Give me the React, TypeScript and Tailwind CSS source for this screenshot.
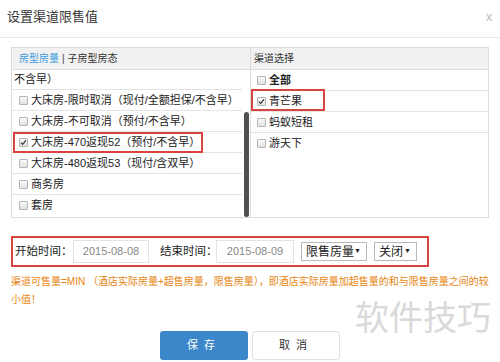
import React from 'react'

const leftRows = [
  { label: '大床房-限时取消（现付/全额担保/不含早）', checked: false },
  { label: '大床房-不可取消（预付/不含早）', checked: false },
  { label: '大床房-470返现52（预付/不含早）', checked: true, marked: true },
  { label: '大床房-480返现53（现付/含双早）', checked: false },
  { label: '商务房', checked: false },
  { label: '套房', checked: false },
]

const channels = [
  { label: '全部', checked: false, bold: true },
  { label: '青芒果', checked: true, marked: true },
  { label: '蚂蚁短租', checked: false },
  { label: '游天下', checked: false },
]

function Box({ checked }: { checked: boolean }) {
  return (
    <span className="mr-[3px] flex h-[9px] w-[9px] shrink-0 items-center justify-center rounded-[1px] border border-[#b5b5b5] bg-gradient-to-b from-[#fafafa] to-[#e2e2e2]">
      {checked && (
        <svg viewBox="0 0 8 8" className="h-[7px] w-[7px]">
          <path d="M1.2 4.2 L3.1 6.1 L6.8 1.6" fill="none" stroke="#333" strokeWidth="1.4" />
        </svg>
      )}
    </span>
  )
}

function Select({ label, width }: { label: string; width: string }) {
  return (
    <div
      className={`flex h-[19px] ${width} items-center justify-between border border-[#b9b9b9] bg-white pl-[4px] pr-[5px] text-[12px] text-[#222]`}
    >
      <span className="whitespace-nowrap">{label}</span>
      <span className="text-[7px] text-[#222]">▼</span>
    </div>
  )
}

export default function App() {
  return (
    <div className="relative h-[362px] w-[500px] overflow-hidden bg-white font-['Liberation_Sans','Noto_Sans_CJK_SC',sans-serif] text-[#333]">
      <div className="flex h-[38px] items-center justify-between border-b border-[#e8e8e8] pl-[7px] pr-[8px] pb-[3px]">
        <span className="text-[13px] text-[#333]">设置渠道限售值</span>
        <span className="text-[12px] text-[#bbb]">x</span>
      </div>

      <div className="px-[11px] pt-[9px]">
        <div className="flex h-[171px] border border-[#dcdcdc]">
          {/* room types */}
          <div className="flex w-[239px] flex-col border-r border-[#dcdcdc]">
            <div className="flex h-[22px] items-center border-b border-[#dcdcdc] bg-[#f1f1f1] pl-[7px] text-[10px]">
              <span className="text-[#3d9be0]">房型房量</span>
              <span className="mx-[3px] text-[#444]">|</span>
              <span className="text-[#333]">子房型房态</span>
            </div>
            <div className="flex flex-1 overflow-hidden">
              <div className="flex w-[231px] flex-col">
                <div className="flex h-[20px] items-center border-b border-[#e3e3e3] pl-[2px] text-[11px] text-[#222]">
                  不含早）
                </div>
                {leftRows.map((row, i) => (
                  <div
                    key={row.label}
                    className={`relative flex h-[21px] items-center pl-[7px] text-[11px] text-[#222] ${
                      i < leftRows.length - 1 ? 'border-b border-[#e3e3e3]' : ''
                    }`}
                  >
                    <Box checked={row.checked} />
                    <span className="whitespace-nowrap">{row.label}</span>
                    {row.marked && (
                      <span className="absolute left-[1px] top-[0px] h-[21px] w-[190px] border-2 border-[#d8443f]" />
                    )}
                  </div>
                ))}
              </div>
              <div className="flex w-[8px] justify-center">
                <div className="mt-[42px] h-[105px] w-[5px] rounded-[3px] bg-[#4f4f4f]" />
              </div>
            </div>
          </div>

          {/* channels */}
          <div className="flex flex-1 flex-col">
            <div className="flex h-[22px] items-center border-b border-[#dcdcdc] bg-[#f1f1f1] pl-[3px] text-[10px] text-[#333]">
              渠道选择
            </div>
            {channels.map((c, i) => (
              <div
                key={c.label}
                className={`relative flex h-[21px] items-center pl-[6px] text-[11px] text-[#222] ${
                  i < channels.length - 1 ? 'border-b border-[#e3e3e3]' : ''
                }`}
              >
                <Box checked={c.checked} />
                <span className={c.bold ? 'font-bold' : ''}>{c.label}</span>
                {c.marked && (
                  <span className="absolute left-[0px] top-[-2px] h-[22px] w-[74px] border-2 border-[#d8443f]" />
                )}
              </div>
            ))}
          </div>
        </div>

        <div className="mt-[18px] flex h-[31px] w-[418px] items-center border-2 border-[#d8443f] pl-[2px]">
          <span className="w-[58px] shrink-0 whitespace-nowrap text-[11.5px] text-[#222]">开始时间：</span>
          <div className="flex h-[23px] w-[76px] shrink-0 items-center justify-center border border-[#e3e3e3] text-[11px] text-[#888]">
            2015-08-08
          </div>
          <span className="ml-[11px] w-[56px] shrink-0 whitespace-nowrap text-[11.5px] text-[#222]">结束时间：</span>
          <div className="flex h-[23px] w-[78px] shrink-0 items-center justify-center border border-[#e3e3e3] text-[11px] text-[#888]">
            2015-08-09
          </div>
          <div className="ml-[7px] shrink-0">
            <Select label="限售房量" width="w-[66px]" />
          </div>
          <div className="ml-[7px] shrink-0">
            <Select label="关闭" width="w-[43px]" />
          </div>
        </div>

        <div className="mt-[6px] text-[10px] leading-[18px] text-[#e8850f]">
          <div className="whitespace-nowrap">
            渠道可售量=MIN （酒店实际房量+超售房量，限售房量），即酒店实际房量加超售量的和与限售房量之间的较
          </div>
          <div>小值！</div>
        </div>

        <div className="mt-[22px] flex justify-center gap-[4px]">
          <button className="flex h-[29px] w-[88px] items-center justify-center rounded-[3px] bg-[#3c87c9] text-[11px] tracking-[6px] text-white">
            保存
          </button>
          <button className="flex h-[29px] w-[88px] items-center justify-center rounded-[3px] border border-[#e0e0e0] bg-white text-[11px] tracking-[6px] text-[#333]">
            取消
          </button>
        </div>
      </div>

      <span className="pointer-events-none absolute left-[355px] top-[293px] text-[34px] text-[#d9d9d9]">
        软件技巧
      </span>
    </div>
  )
}
